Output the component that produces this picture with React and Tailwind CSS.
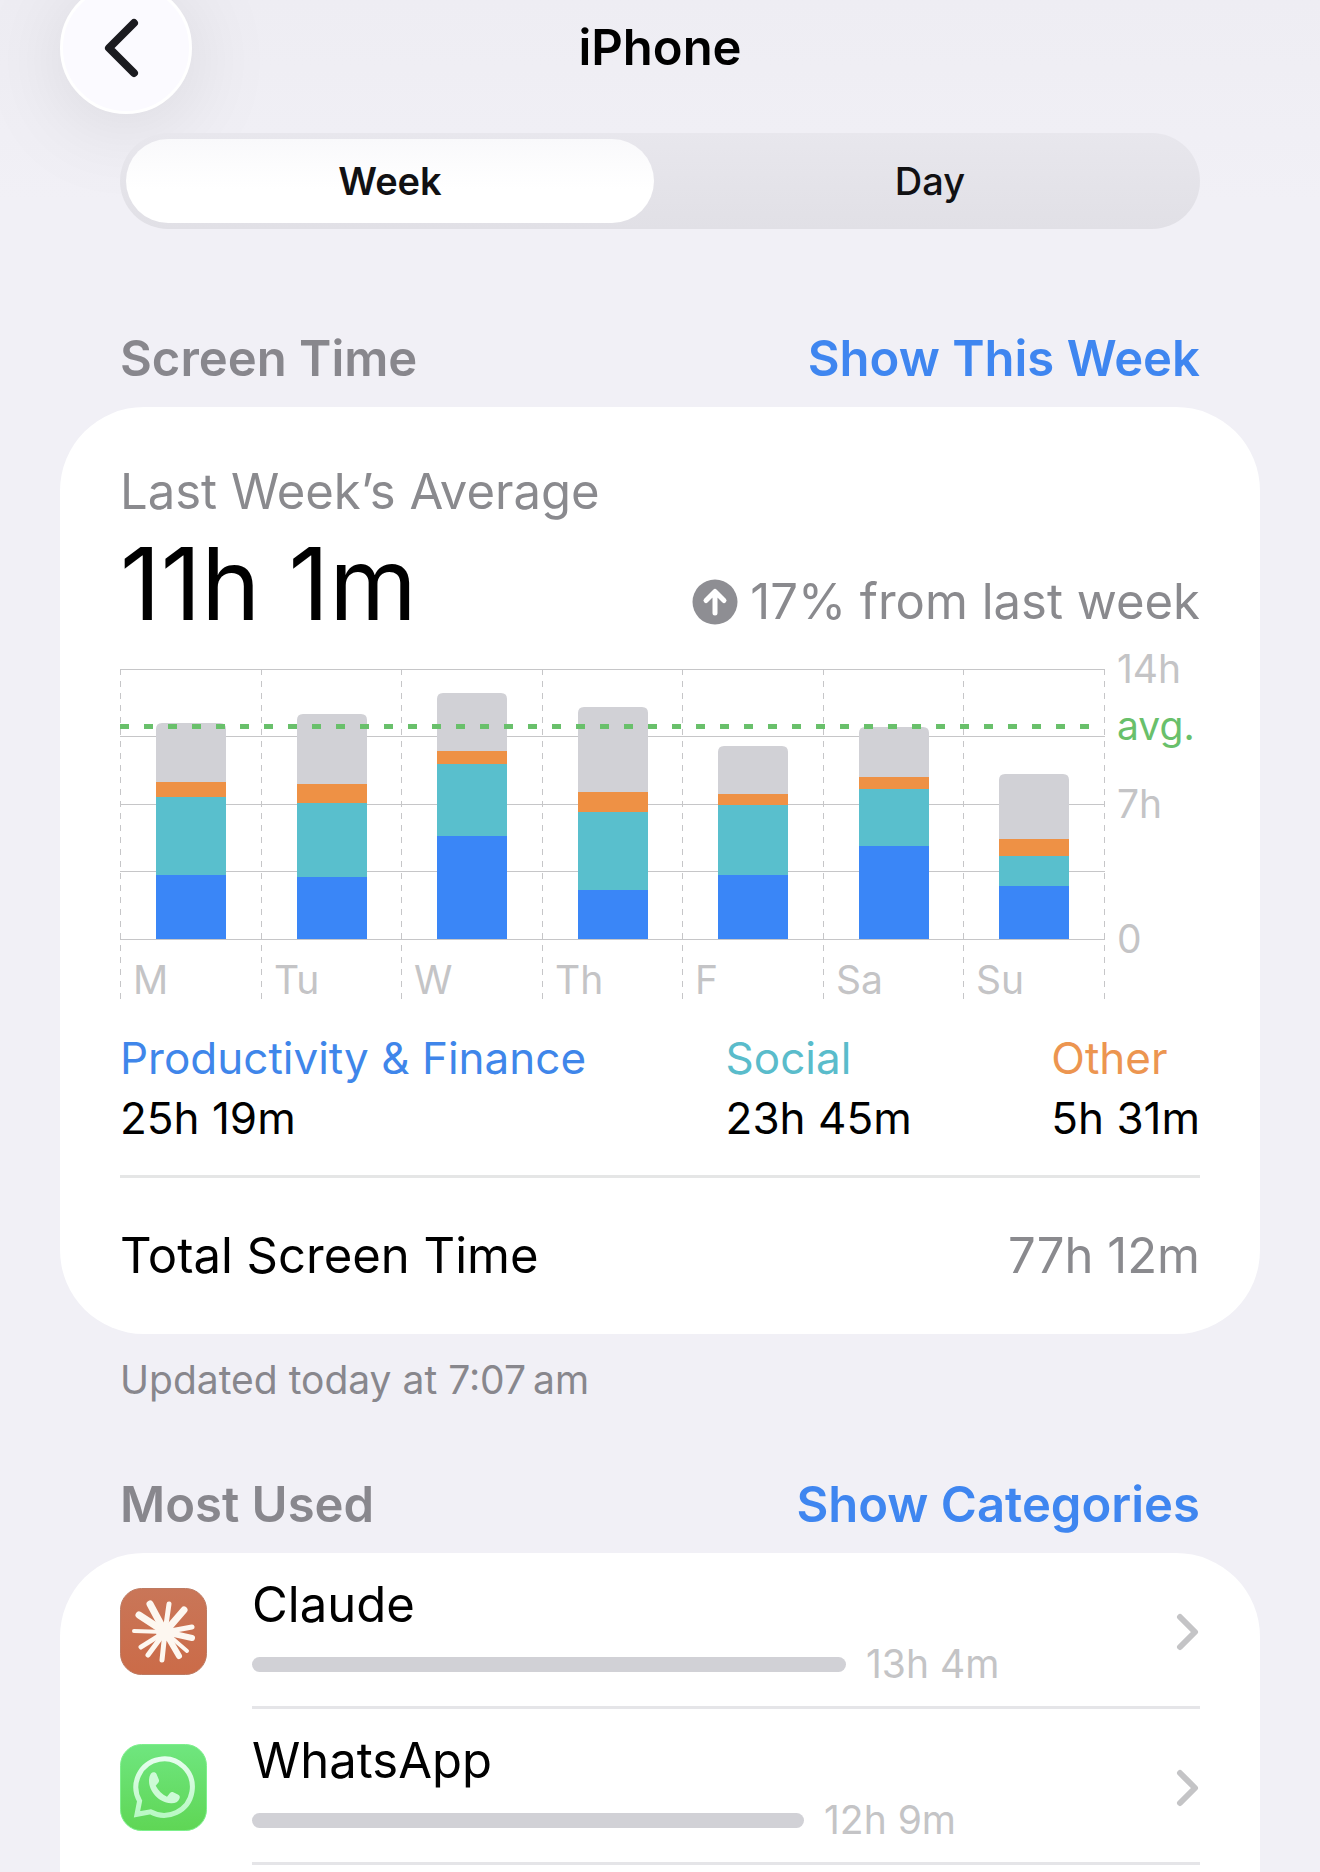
import React, { useState } from 'react';

const PLOT = { top: 14, height: 270, width: 984, barWidth: 70, maxMinutes: 840 };

const CATEGORIES = [
  { key: 'productivity', label: 'Productivity & Finance', total: '25h 19m', text: 'text-[#3f86ea]' },
  { key: 'social', label: 'Social', total: '23h 45m', text: 'text-[#5abccb]' },
  { key: 'other', label: 'Other', total: '5h 31m', text: 'text-[#ec9550]' },
];

// minutes per category, stacked from the baseline up
const DAYS = [
  { label: 'M', productivity: 199, social: 243, other: 47, rest: 184 },
  { label: 'Tu', productivity: 193, social: 230, other: 59, rest: 218 },
  { label: 'W', productivity: 320, social: 224, other: 40, rest: 180 },
  { label: 'Th', productivity: 152, social: 243, other: 62, rest: 264 },
  { label: 'F', productivity: 199, social: 218, other: 34, rest: 149 },
  { label: 'Sa', productivity: 289, social: 177, other: 37, rest: 156 },
  { label: 'Su', productivity: 165, social: 93, other: 53, rest: 202 },
];

const STACK = [
  { key: 'productivity', fill: 'fill-[#3a86f7]' },
  { key: 'social', fill: 'fill-[#59bfcd]' },
  { key: 'other', fill: 'fill-[#ee9145]' },
];

const toUnits = (minutes) => Math.round((minutes * PLOT.height) / PLOT.maxMinutes);
const columnX = (i) => Math.round((PLOT.width * i) / DAYS.length);

function DayBar({ day, x }) {
  let y = PLOT.top + PLOT.height;
  const segments = STACK.map(({ key, fill }) => {
    const h = toUnits(day[key]);
    y -= h;
    return <rect key={key} x={x} y={y} width={PLOT.barWidth} height={h} className={fill} />;
  });
  const restHeight = toUnits(day.rest);
  const inner = PLOT.barWidth - 12;

  return (
    <g>
      {segments}
      <path
        d={`M${x} ${y}v${6 - restHeight}q0-6 6-6h${inner}q6 0 6 6v${restHeight - 6}z`}
        className="fill-[#d1d1d6]"
      />
    </g>
  );
}

function WeekChart() {
  const bottom = PLOT.top + PLOT.height;

  return (
    <svg viewBox="0 -16 1080 368" className="block w-full mt-[5px] text-[39px]" role="img" aria-label="Screen time per day">
      {[0, 1, 2, 3, 4].map((i) => {
        const y = Math.floor(PLOT.top + (PLOT.height * i) / 4) + 0.5;
        return <line key={i} x1="0" x2={PLOT.width + 1} y1={y} y2={y} className="stroke-[#c6c6c8]" />;
      })}
      {[...DAYS, null].map((_, i) => (
        <line
          key={i}
          x1={columnX(i) + 0.5}
          x2={columnX(i) + 0.5}
          y1={PLOT.top}
          y2="344"
          strokeDasharray="6 6"
          className="stroke-[#c6c6c8]"
        />
      ))}
      {DAYS.map((day, i) => (
        <g key={day.label}>
          <DayBar day={day} x={columnX(i) + 36} />
          <text x={columnX(i) + 13} y="339" className="fill-[#c4c4c6]">{day.label}</text>
        </g>
      ))}
      <line x1="0" x2={PLOT.width} y1="71.500" y2="71.500" strokeWidth="5" strokeDasharray="9 15" className="stroke-[#69c06b]" />
      <text x="997" y="28" className="fill-[#c4c4c6]">14h</text>
      <text x="997" y="85" className="fill-[#69c06b]">avg.</text>
      <text x="997" y="163" className="fill-[#c4c4c6]">7h</text>
      <text x="997" y={bottom + 14} className="fill-[#c4c4c6]">0</text>
    </svg>
  );
}

function ClaudeIcon() {
  const rays = [
    [30, 16, 7], [49, 16, 5], [64, 22, 7], [72, 39, 5], [72, 50, 6], [67, 63, 4],
    [59, 68, 6], [42, 72, 5], [28, 67, 5], [21, 59, 5], [14, 43, 4], [19, 27, 7],
  ];
  return (
    <svg viewBox="0 0 87 87" className="w-[87px] h-[87px] shrink-0" aria-hidden="true">
      <defs>
        <linearGradient id="claude-bg" x1="0" y1="0" x2="0" y2="1">
          <stop offset="0" stopColor="#c97658" />
          <stop offset="1" stopColor="#cb6b48" />
        </linearGradient>
      </defs>
      <rect x="0.5" y="0.5" width="86" height="86" rx="21" fill="url(#claude-bg)" stroke="#bd7a62" />
      <g stroke="#fdf7f0" strokeLinecap="round">
        {rays.map(([x, y, w]) => (
          <line key={`${x}-${y}`} x1="45" y1="44" x2={x} y2={y} strokeWidth={w} />
        ))}
      </g>
      <circle cx="45" cy="44" r="9" fill="#fdf7f0" />
    </svg>
  );
}

function WhatsAppIcon() {
  return (
    <svg viewBox="0 0 87 87" className="w-[87px] h-[87px] shrink-0" aria-hidden="true">
      <defs>
        <linearGradient id="wa-bg" x1="0" y1="0" x2="0" y2="1">
          <stop offset="0" stopColor="#6fe67f" />
          <stop offset="1" stopColor="#5fd655" />
        </linearGradient>
        <linearGradient id="wa-ring" x1="0" y1="0" x2="0" y2="1">
          <stop offset="0" stopColor="#e6fdee" />
          <stop offset="1" stopColor="#b9f8c4" />
        </linearGradient>
      </defs>
      <rect x="0.5" y="0.5" width="86" height="86" rx="21" fill="url(#wa-bg)" stroke="#7df08c" />
      <path
        d="M19.6 57A28.2 28.2 0 1 1 30.5 67.8L17 70.3Z"
        fill="none"
        stroke="url(#wa-ring)"
        strokeWidth="5"
      />
      <path
        d="M31 29.500c1.500-1.500 4.500-1.800 5.500.5l2.300 5.500c.5 1.500.2 2.500-.8 3.600l-2.300 2.700c2.800 5 6.300 8.500 11.300 10.900l3-3.600c1-1.200 2-1.400 3.300-.8l5 2.500c1.500.8 1.800 1.700 1.200 3.700-1.300 3.500-4.500 5-8.500 4.800C38 58.500 29 46.500 29 37c0-3 .5-5.500 2-7.500z"
        fill="#cdfad6"
      />
    </svg>
  );
}

const APPS = [
  { name: 'Claude', time: '13h 4m', icon: <ClaudeIcon />, barClass: 'w-[594px]' },
  { name: 'WhatsApp', time: '12h 9m', icon: <WhatsAppIcon />, barClass: 'w-[552px]' },
];

function AppRow({ app }) {
  return (
    <li>
      <a href={`#${app.name.toLowerCase()}`} className="flex items-center gap-[45px]">
        {app.icon}
        <div className="flex-1 flex items-center border-b-3 border-[#e5e5e8] pt-[22px] pb-[18px]">
          <div className="flex-1">
            <div className="text-[49px] leading-[60px]">{app.name}</div>
            <div className="flex items-center gap-5 mt-[5px]">
              <div className={`h-[15px] rounded-full bg-[#d1d1d6] ${app.barClass}`} />
              <span className="text-[39px] leading-[48px] text-[#c4c4c6]">{app.time}</span>
            </div>
          </div>
          <svg viewBox="0 0 24 40" className="w-6 h-10" fill="none" aria-hidden="true">
            <path d="M4 5L19 20L4 35" stroke="#c4c4c6" strokeWidth="6" strokeLinecap="round" strokeLinejoin="round" />
          </svg>
        </div>
      </a>
    </li>
  );
}

function SectionHeader({ title, action }) {
  return (
    <div className="flex items-center justify-between px-[60px] mb-[18px] text-[49px] leading-[60px] font-semibold">
      <h2 className="text-[#88878d]">{title}</h2>
      <button type="button" className="text-[#3f86f0]">{action}</button>
    </div>
  );
}

export default function App() {
  const [range, setRange] = useState('Week');

  return (
    <div className="min-h-screen flex flex-col overflow-hidden px-[60px] bg-[#f1f0f6] bg-linear-to-b from-[#eeedf3] to-[#f1f0f6] to-[200px] text-black font-['Inter',sans-serif]">
      {/* Nav bar */}
      <header className="grid grid-cols-[132px_1fr_132px] items-center -mt-[18px]">
        <button
          type="button"
          aria-label="Back"
          className="w-[132px] h-[132px] rounded-full bg-[#fbfaff] border-3 border-white flex items-center justify-center shadow-[0_12px_90px_rgba(0,0,0,0.1)]"
        >
          <svg viewBox="0 0 40 64" className="w-10 h-16 -ml-2.5" fill="none" aria-hidden="true">
            <path d="M33 7L8 32L33 57" stroke="#1b1b20" strokeWidth="8" strokeLinecap="round" strokeLinejoin="round" />
          </svg>
        </button>
        <h1 className="text-center text-[49px] leading-[60px] font-semibold">iPhone</h1>
      </header>

      {/* Week / Day switch */}
      <div className="grid grid-cols-2 gap-3 mx-[60px] mt-[19px] h-24 p-1.5 rounded-full bg-linear-to-b from-[#e8e7ed] to-[#e1e0e6]">
        {['Week', 'Day'].map((name) => (
          <button
            key={name}
            type="button"
            aria-pressed={range === name}
            onClick={() => setRange(name)}
            className={`rounded-full text-[38px] leading-[48px] text-[#111113] ${
              range === name ? 'bg-linear-to-b from-[#f9f9fb] to-white to-60% font-semibold' : 'font-medium'
            }`}
          >
            {name}
          </button>
        ))}
      </div>

      {/* Screen Time */}
      <section className="mt-[100px]">
        <SectionHeader title="Screen Time" action="Show This Week" />
        <div className="bg-white rounded-[84px] px-[60px] pt-[55px]">
          <div className="text-[49px] leading-[60px] text-[#8a8a8e]">Last Week’s Average</div>
          <div className="flex items-end justify-between mt-3">
            <div className="text-[100px] leading-[100px]">11h 1m</div>
            <div className="flex items-center gap-3 pb-0.5 text-[49px] leading-[60px] text-[#8a8a8e]">
              <svg viewBox="0 0 46 46" className="w-[46px] h-[46px]" aria-hidden="true">
                <circle cx="23" cy="23" r="22.500" fill="#8e8e93" />
                <path d="M23 34V13M14 21.500L23 12.500L32 21.500" fill="none" stroke="#fff" strokeWidth="5" strokeLinecap="round" strokeLinejoin="round" />
              </svg>
              17% from last week
            </div>
          </div>

          <WeekChart />

          <dl className="flex justify-between mt-[21px] text-[44px] leading-[60px]">
            {CATEGORIES.map((c) => (
              <div key={c.key}>
                <dt className={c.text}>{c.label}</dt>
                <dd>{c.total}</dd>
              </div>
            ))}
          </dl>

          <div className="flex items-center justify-between mt-[27px] h-[159px] border-t-3 border-[#e5e6e6] text-[49px] leading-[60px]">
            <span>Total Screen Time</span>
            <span className="text-[#8a8a8e]">77h 12m</span>
          </div>
        </div>
        <p className="px-[60px] mt-[22px] text-[39px] leading-[48px] text-[#88878d]">Updated today at 7:07&#8201;am</p>
      </section>

      {/* Most Used */}
      <section className="flex-1 flex flex-col mt-[71px]">
        <SectionHeader title="Most Used" action="Show Categories" />
        <ul className="flex-1 bg-white rounded-t-[84px] px-[60px]">
          {APPS.map((app) => (
            <AppRow key={app.name} app={app} />
          ))}
        </ul>
      </section>
    </div>
  );
}
